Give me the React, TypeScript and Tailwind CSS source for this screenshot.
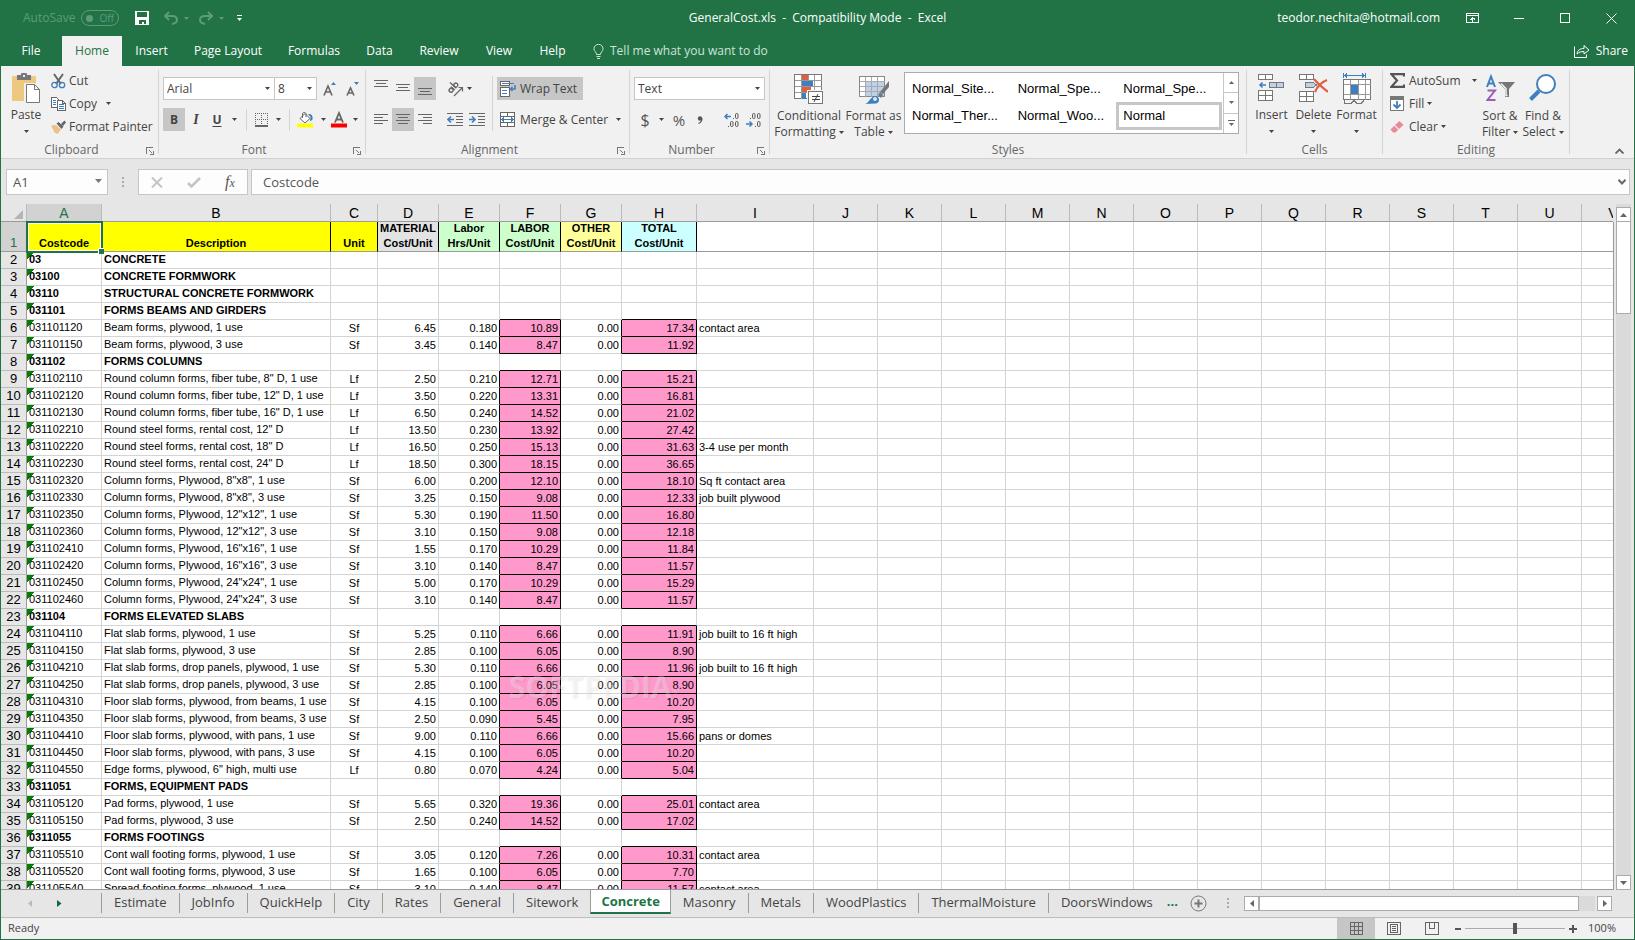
import React from "react";

type Row = [string, string, string?, string?, string?, string?, string?, string?, string?];

const rows: Row[] = [
  ["03", "CONCRETE"],
  ["03100", "CONCRETE FORMWORK"],
  ["03110", "STRUCTURAL CONCRETE FORMWORK"],
  ["031101", "FORMS BEAMS AND GIRDERS"],
  ["031101120", "Beam forms, plywood, 1 use", "Sf", "6.45", "0.180", "10.89", "0.00", "17.34", "contact area"],
  ["031101150", "Beam forms, plywood, 3 use", "Sf", "3.45", "0.140", "8.47", "0.00", "11.92"],
  ["031102", "FORMS COLUMNS"],
  ["031102110", 'Round column forms, fiber tube, 8" D, 1 use', "Lf", "2.50", "0.210", "12.71", "0.00", "15.21"],
  ["031102120", 'Round column forms, fiber tube, 12" D, 1 use', "Lf", "3.50", "0.220", "13.31", "0.00", "16.81"],
  ["031102130", 'Round column forms, fiber tube, 16" D, 1 use', "Lf", "6.50", "0.240", "14.52", "0.00", "21.02"],
  ["031102210", 'Round steel forms, rental cost, 12" D', "Lf", "13.50", "0.230", "13.92", "0.00", "27.42"],
  ["031102220", 'Round steel forms, rental cost, 18" D', "Lf", "16.50", "0.250", "15.13", "0.00", "31.63", "3-4 use per month"],
  ["031102230", 'Round steel forms, rental cost, 24" D', "Lf", "18.50", "0.300", "18.15", "0.00", "36.65"],
  ["031102320", 'Column forms, Plywood, 8"x8", 1 use', "Sf", "6.00", "0.200", "12.10", "0.00", "18.10", "Sq ft contact area"],
  ["031102330", 'Column forms, Plywood, 8"x8", 3 use', "Sf", "3.25", "0.150", "9.08", "0.00", "12.33", "job built plywood"],
  ["031102350", 'Column forms, Plywood, 12"x12", 1 use', "Sf", "5.30", "0.190", "11.50", "0.00", "16.80"],
  ["031102360", 'Column forms, Plywood, 12"x12", 3 use', "Sf", "3.10", "0.150", "9.08", "0.00", "12.18"],
  ["031102410", 'Column forms, Plywood, 16"x16", 1 use', "Sf", "1.55", "0.170", "10.29", "0.00", "11.84"],
  ["031102420", 'Column forms, Plywood, 16"x16", 3 use', "Sf", "3.10", "0.140", "8.47", "0.00", "11.57"],
  ["031102450", 'Column forms, Plywood, 24"x24", 1 use', "Sf", "5.00", "0.170", "10.29", "0.00", "15.29"],
  ["031102460", 'Column forms, Plywood, 24"x24", 3 use', "Sf", "3.10", "0.140", "8.47", "0.00", "11.57"],
  ["031104", "FORMS ELEVATED SLABS"],
  ["031104110", "Flat slab forms, plywood, 1 use", "Sf", "5.25", "0.110", "6.66", "0.00", "11.91", "job built to 16 ft high"],
  ["031104150", "Flat slab forms, plywood, 3 use", "Sf", "2.85", "0.100", "6.05", "0.00", "8.90"],
  ["031104210", "Flat slab forms, drop panels, plywood, 1 use", "Sf", "5.30", "0.110", "6.66", "0.00", "11.96", "job built to 16 ft high"],
  ["031104250", "Flat slab forms, drop panels, plywood, 3 use", "Sf", "2.85", "0.100", "6.05", "0.00", "8.90"],
  ["031104310", "Floor slab forms, plywood, from beams, 1 use", "Sf", "4.15", "0.100", "6.05", "0.00", "10.20"],
  ["031104350", "Floor slab forms, plywood, from beams, 3 use", "Sf", "2.50", "0.090", "5.45", "0.00", "7.95"],
  ["031104410", "Floor slab forms, plywood, with pans, 1 use", "Sf", "9.00", "0.110", "6.66", "0.00", "15.66", "pans or domes"],
  ["031104450", "Floor slab forms, plywood, with pans, 3 use", "Sf", "4.15", "0.100", "6.05", "0.00", "10.20"],
  ["031104550", 'Edge forms, plywood, 6" high, multi use', "Lf", "0.80", "0.070", "4.24", "0.00", "5.04"],
  ["0311051", "FORMS, EQUIPMENT PADS"],
  ["031105120", "Pad forms, plywood, 1 use", "Sf", "5.65", "0.320", "19.36", "0.00", "25.01", "contact area"],
  ["031105150", "Pad forms, plywood, 3 use", "Sf", "2.50", "0.240", "14.52", "0.00", "17.02"],
  ["0311055", "FORMS FOOTINGS"],
  ["031105510", "Cont wall footing forms, plywood, 1 use", "Sf", "3.05", "0.120", "7.26", "0.00", "10.31", "contact area"],
  ["031105520", "Cont wall footing forms, plywood, 3 use", "Sf", "1.65", "0.100", "6.05", "0.00", "7.70"],
  ["031105540", "Spread footing forms, plywood, 1 use", "Sf", "3.10", "0.140", "8.47", "0.00", "11.57", "contact area"],
];

const blankColumns = ["J", "K", "L", "M", "N", "O", "P", "Q", "R", "S", "T", "U", "V"];
const columns = ["A", "B", "C", "D", "E", "F", "G", "H", "I", ...blankColumns];

function Caret({ up = false }: { up?: boolean }) {
  return (
    <svg width="5" height="3" viewBox="0 0 5 3" className="shrink-0" aria-hidden="true">
      <path d={up ? "M0 3L2.5 0L5 3z" : "M0 0h5L2.5 3z"} fill="currentColor" />
    </svg>
  );
}

function Group({ label, launcher = false, className, children }: { label?: string; launcher?: boolean; className: string; children?: React.ReactNode }) {
  return (
    <section aria-label={label} className={className}>
      <div className="flex min-w-0 flex-1 flex-col">
        <div className="flex h-[76px]">{children}</div>
        <div className="flex h-4 items-center text-[#666]">
          <span className="flex-1 text-center">{label}</span>
          {launcher && (
            <button aria-label={label + " settings"} className="w-4 pt-0.5 pl-1">
              <svg width="8" height="8" viewBox="0 0 8 8" fill="none" stroke="#777" shapeRendering="crispEdges">
                <path d="M.5 6.500V.5h6M3 3l3.500 3.500M3.500 7.500h4v-4" />
              </svg>
            </button>
          )}
        </div>
      </div>
      <div className="my-1 w-px bg-[#d4d4d4]" />
    </section>
  );
}

function Divider() {
  return <span className="h-[22px] w-px bg-[#d4d4d4]" />;
}

function Lines({ widths, className = "" }: { widths: [number, number][]; className?: string }) {
  return (
    <svg width="14" height="17" viewBox="0 0 14 17" stroke="#666" shapeRendering="crispEdges" className={className} aria-hidden="true">
      {widths.map(([x, w], i) => (
        <path key={i} d={`M${x} ${i * 3 + 2.5}h${w}`} />
      ))}
    </svg>
  );
}

function PasteIcon() {
  return (
    <svg width="29" height="31" viewBox="0 0 29 31" aria-hidden="true">
      <rect y="3" width="24" height="25" rx="1" fill="#edc87e" />
      <path d="M5 2h4a3 3 0 0 1 6 0h4v5H5z" fill="#777" />
      <rect x="11" y="2" width="2" height="2" fill="#f1f1f1" />
      <path d="M13.500 11.500h9l5.500 5.500v13h-14.500z" fill="#fff" stroke="#f1f1f1" strokeWidth="3" />
      <path d="M14.500 11.500h8l5 5v13h-13zM22.500 11.500v5h5" fill="#fff" stroke="#777" />
    </svg>
  );
}

function CutIcon() {
  return (
    <svg width="15" height="16" viewBox="0 0 15 16" fill="none" aria-hidden="true">
      <path d="M3 1l7 10M12 1L5 11" stroke="#666" strokeWidth="2" />
      <circle cx="3.500" cy="12" r="2.700" stroke="#3e7fbf" strokeWidth="1.300" />
      <circle cx="11" cy="12" r="2.700" stroke="#3e7fbf" strokeWidth="1.300" />
    </svg>
  );
}

function CopyIcon() {
  return (
    <svg width="15" height="14" viewBox="0 0 15 14" fill="#fff" stroke="#666" shapeRendering="crispEdges" aria-hidden="true">
      <path d="M.5 .5h5l3 3v7h-8z" />
      <path d="M2 3.500h3M2 5.500h3M2 7.500h3" stroke="#3e7fbf" />
      <path d="M6.500 3.500h5l3 3v7h-8zM11.500 3.500v3h3" />
      <path d="M8 7.500h5M8 9.500h5M8 11.500h5" stroke="#3e7fbf" />
    </svg>
  );
}

function PainterIcon() {
  return (
    <svg width="15" height="14" viewBox="0 0 15 14" aria-hidden="true">
      <path d="M0 5.500L5 5l5 4.500-3.500 4.500-3-1.500z" fill="#edc087" />
      <path d="M5.500 3.500l2-1.500 5 4.500-2 2.500z" fill="#666" />
      <path d="M10 4l3.500-3.500 1.500 2L12 6z" fill="#666" />
    </svg>
  );
}

function ClipboardGroup() {
  return (
    <Group label="Clipboard" launcher className="flex w-[158px]">
      <button className="ml-[5px] flex w-10 flex-col items-center pt-[7px]">
        <PasteIcon />
        <span className="mt-0.5 leading-[18px]">Paste</span>
        <span className="mt-1.5">
          <Caret />
        </span>
      </button>
      <div className="flex flex-col pt-[3px] pl-[5px]">
        <button className="flex h-[23px] items-center gap-[3px]">
          <CutIcon />
          Cut
        </button>
        <button className="flex h-[23px] items-center gap-[3px]">
          <CopyIcon />
          Copy
          <span className="ml-1.5">
            <Caret />
          </span>
        </button>
        <button className="flex h-[23px] items-center gap-[3px] whitespace-nowrap">
          <PainterIcon />
          Format Painter
        </button>
      </div>
    </Group>
  );
}

function SelectBox({ label, value, options, className }: { label: string; value: string; options: string[]; className: string }) {
  return (
    <div className={className}>
      <select
        aria-label={label}
        defaultValue={value}
        className="h-[23px] w-full appearance-none border border-[#c6c6c6] bg-white pl-[3px] text-[12px] text-[#444] outline-none"
      >
        {options.map((o) => (
          <option key={o}>{o}</option>
        ))}
      </select>
      <span className="pointer-events-none absolute top-[10px] right-[5px]">
        <Caret />
      </span>
    </div>
  );
}

function FontGroup() {
  return (
    <Group label="Font" launcher className="flex w-[207px]">
      <div className="flex flex-col gap-2 pt-[11px] pl-1">
        <div className="flex h-[23px] items-center">
          <SelectBox label="Font" value="Arial" options={["Arial", "Calibri"]} className="relative w-[112px]" />
          <SelectBox label="Font size" value="8" options={["8", "10", "12"]} className="relative -ml-px w-[43px]" />
          <button aria-label="Increase font size" className="ml-1.5">
            <svg width="14" height="16" viewBox="0 0 14 16">
              <path d="M1 14.500L5 5l4 9.500M2.500 11h5" fill="none" stroke="#666" strokeWidth="1.600" />
              <path d="M8 4l2.500-3L13 4z" fill="#3e7fbf" />
            </svg>
          </button>
          <button aria-label="Decrease font size" className="ml-[9px]">
            <svg width="14" height="16" viewBox="0 0 14 16">
              <path d="M1 14.500L4.500 7 8 14.500M2.500 12h4" fill="none" stroke="#666" strokeWidth="1.600" />
              <path d="M8 1h5l-2.500 3z" fill="#3e7fbf" />
            </svg>
          </button>
        </div>
        <div className="flex h-[23px] items-center">
          <button className="h-[23px] w-[22px] bg-[#c6c6c6] text-[12px] font-bold">B</button>
          <button className="w-[22px] font-[Liberation_Serif,serif] text-[14px] font-bold italic">I</button>
          <button className="w-[20px] text-[12px] font-bold underline underline-offset-2">U</button>
          <span className="ml-[5px] w-[14px]">
            <Caret />
          </span>
          <Divider />
          <button aria-label="Borders" className="ml-2">
            <svg width="14" height="14" viewBox="0 0 14 14" fill="none" stroke="#666" shapeRendering="crispEdges">
              <path d="M0 .5h13M.5 0v13M12.500 0v13M6.500 0v13M0 6.500h13" strokeDasharray="1 1" />
              <path d="M0 13h13" strokeWidth="2" />
            </svg>
          </button>
          <span className="ml-[7px] w-[13px]">
            <Caret />
          </span>
          <Divider />
          <button aria-label="Fill color" className="ml-[7px]">
            <svg width="17" height="17" viewBox="0 0 17 17">
              <path d="M3 7.500L8 2.500l5 5-5 4.500z" fill="#fff" stroke="#666" />
              <path d="M5.500 7V2.500a2 2 0 0 1 3.500 0V6" fill="none" stroke="#666" />
              <path d="M11 3c4-.5 5 2 4.500 5.500L13 10.500 13.500 6z" fill="#3e7fbf" />
              <path d="M0 12.500h16v4H0z" fill="#ff0" />
            </svg>
          </button>
          <span className="ml-[7px] w-[10px]">
            <Caret />
          </span>
          <button aria-label="Font color">
            <svg width="16" height="17" viewBox="0 0 16 17">
              <path d="M4 11.500L8 2l4 9.500M5.500 8.500h5" fill="none" stroke="#666" strokeWidth="1.800" />
              <path d="M0 12.500h16v4H0z" fill="#f00" />
            </svg>
          </button>
          <span className="ml-1.5">
            <Caret />
          </span>
        </div>
      </div>
    </Group>
  );
}

function IndentIcon({ out = false }: { out?: boolean }) {
  return (
    <svg width="16" height="13" viewBox="0 0 16 13" shapeRendering="crispEdges" aria-hidden="true">
      <path d="M0 .5h16M9 3.500h7M9 6.500h7M9 9.500h7M0 12.500h16" stroke="#666" />
      <path
        d={out ? "M7 6.500H1M4 3.500l-3 3 3 3" : "M0 6.500h6M3 3.500l3 3-3 3"}
        fill="none"
        stroke="#3e7fbf"
        strokeWidth="1.600"
        shapeRendering="auto"
      />
    </svg>
  );
}

function AlignmentGroup() {
  const alignButton = "flex h-[23px] w-[22px] items-center justify-center";
  const alignActive = "flex h-[23px] w-[22px] items-center justify-center bg-[#c6c6c6]";
  return (
    <Group label="Alignment" launcher className="flex w-[264px]">
      <div className="flex flex-col gap-2 pt-[11px] pl-1">
        <div className="flex h-[23px] items-center">
          <button aria-label="Top align" className={alignButton}>
            <Lines widths={[[0, 14], [2, 10], [0, 14]]} className="mb-1" />
          </button>
          <button aria-label="Middle align" className={alignButton}>
            <Lines widths={[[0, 14], [2, 10], [0, 14]]} className="mt-1" />
          </button>
          <button aria-label="Bottom align" className={alignActive}>
            <Lines widths={[[0, 14], [2, 10], [0, 14]]} className="mt-3" />
          </button>
          <span className="ml-1">
            <Divider />
          </span>
          <button aria-label="Orientation" className="ml-[7px]">
            <svg width="16" height="16" viewBox="0 0 16 16" fill="none" stroke="#666" className="overflow-visible">
              <g transform="translate(5 12) rotate(-48)" strokeWidth="1.400">
                <circle cx="1.500" cy="-2.500" r="2" />
                <path d="M4 -5v5M6.500 -8.500V0" />
                <circle cx="8.500" cy="-2.500" r="2" />
              </g>
              <path d="M7 15L15 7M11.500 6.500H15.500V10.500" strokeWidth="1.200" />
            </svg>
          </button>
          <span className="ml-1">
            <Caret />
          </span>
        </div>
        <div className="flex h-[23px] items-center">
          <button aria-label="Align left" className={alignButton}>
            <Lines widths={[[0, 14], [0, 9], [0, 14], [0, 9]]} className="mt-0.5" />
          </button>
          <button aria-label="Center" className={alignActive}>
            <Lines widths={[[0, 14], [2, 10], [0, 14], [2, 10]]} className="mt-0.5" />
          </button>
          <button aria-label="Align right" className={alignButton}>
            <Lines widths={[[0, 14], [5, 9], [0, 14], [5, 9]]} className="mt-0.5" />
          </button>
          <span className="ml-1">
            <Divider />
          </span>
          <button aria-label="Decrease indent" className="ml-[7px]">
            <IndentIcon out />
          </button>
          <button aria-label="Increase indent" className="ml-1.5">
            <IndentIcon />
          </button>
        </div>
      </div>
      <div className="mt-2.5 ml-[7px] h-[55px] w-px bg-[#d4d4d4]" />
      <div className="flex flex-col items-start gap-2 pt-[11px] pl-1">
        <button className="flex h-[23px] items-center gap-1 bg-[#c6c6c6] pr-1.5 pl-[3px] whitespace-nowrap">
          <svg width="16" height="16" viewBox="0 0 16 16" fill="#fff" stroke="#666" shapeRendering="crispEdges">
            <path d="M.5 .5h9v4h-9zM.5 6.500h9v9h-9z" />
            <path d="M2 2.500h12M2 9.500h5M2 12.500h5" stroke="#3e7fbf" />
            <path d="M15 4v4h-4M12.500 6l-2 2 2 2" fill="none" stroke="#3e7fbf" strokeWidth="1.500" shapeRendering="auto" />
          </svg>
          Wrap Text
        </button>
        <button className="flex h-[23px] items-center gap-1 px-[3px] whitespace-nowrap">
          <svg width="16" height="16" viewBox="0 0 16 16" fill="#fff" stroke="#666" shapeRendering="crispEdges">
            <path d="M.5 .5h14v14h-14zM.5 4.500h14M.5 10.500h14M7.500 .5v4M7.500 10.500v4" />
            <path d="M2 7.500h11M4 5.500l-2 2 2 2M11 5.500l2 2-2 2" fill="none" stroke="#3e7fbf" />
          </svg>
          Merge &amp; Center
          <span className="ml-1">
            <Caret />
          </span>
        </button>
      </div>
    </Group>
  );
}

function DecimalIcon({ increase = false }: { increase?: boolean }) {
  const zero = (x: number, y: number) => <rect key={x + "-" + y} x={x} y={y} width="2.500" height="5" rx="1.200" />;
  const dot = (x: number, y: number) => <path key={"d" + x + "-" + y} d={`M${x} ${y}h1v1h-1z`} fill="#555" stroke="none" />;
  return (
    <svg width="16" height="14" viewBox="0 0 16 14" fill="none" stroke="#555" className="overflow-visible" aria-hidden="true">
      {increase ? [dot(9, 5), zero(11.5, 0.5), dot(4, 13), zero(6.5, 8.5), zero(11.5, 8.5)] : [dot(4, 5), zero(6.5, 0.5), zero(11.5, 0.5), dot(9, 13), zero(11.5, 8.5)]}
      <path
        d={increase ? "M7 3.500H1M3.500 1L1 3.500 3.500 6" : "M0 11h6M3.500 8.500L6 11l-2.500 2.500"}
        stroke="#3e7fbf"
        strokeWidth="1.500"
      />
    </svg>
  );
}

function NumberGroup() {
  return (
    <Group label="Number" launcher className="flex w-[140px]">
      <div className="flex flex-1 flex-col gap-2 pt-[11px] pr-1 pl-1">
        <SelectBox label="Number format" value="Text" options={["Text", "General", "Currency"]} className="relative h-[23px]" />
        <div className="flex h-[23px] items-center">
          <button className="w-[22px] text-[16px] leading-5 text-[#555]">$</button>
          <span className="ml-[3px]">
            <Caret />
          </span>
          <button aria-label="Percent style" className="ml-[7px] w-[16px] text-[15px] leading-5 text-[#555]">%</button>
          <button aria-label="Comma style" className="ml-[7px] flex w-[11px] justify-center">
            <svg width="6" height="8" viewBox="0 0 6 8">
              <circle cx="3" cy="2.500" r="2.200" fill="#555" />
              <path d="M5 2.500C5 5 4 6.500 1.500 7.500" fill="none" stroke="#555" strokeWidth="1.200" />
            </svg>
          </button>
          <span className="ml-3">
            <Divider />
          </span>
          <button aria-label="Increase decimal" className="ml-[7px]">
            <DecimalIcon increase />
          </button>
          <button aria-label="Decrease decimal" className="ml-[6px]">
            <DecimalIcon />
          </button>
        </div>
      </div>
    </Group>
  );
}

function StylesGroup() {
  const styles = ["Normal_Site...", "Normal_Spe...", "Normal_Spe...", "Normal_Ther...", "Normal_Woo...", "Normal"];
  return (
    <Group label="Styles" className="flex min-w-0 flex-1">
      <button className="ml-[5px] flex w-[68px] flex-col items-center pt-2 leading-4 whitespace-nowrap">
        <svg width="30" height="30" viewBox="0 0 30 30" shapeRendering="crispEdges" aria-hidden="true">
          <path d="M.5 .5h27v24h-27z" fill="#fff" stroke="#777" />
          <path d="M8 1h6v6H8zM8 13h9v5H8z" fill="#e05f43" />
          <path d="M8 7h11v5H8zM8 19h4v6H8z" fill="#3e7fbf" />
          <path d="M.5 6.500h27M.5 12.500h27M.5 18.500h27M7.500 .5v24M14.500 .5v6M20.500 .5v24M14.500 18.500v6" fill="none" stroke="#999" />
          <path d="M13.500 16.500h16v13h-16z" fill="#fff" stroke="#f1f1f1" />
          <path d="M14.500 17.500h14v12h-14z" fill="#fff" stroke="#777" />
          <path d="M18 22.500h8M18 25.500h8M24 20l-4 8" stroke="#444" shapeRendering="auto" />
        </svg>
        <span className="mt-1">Conditional</span>
        <span className="flex items-center gap-[3px]">
          Formatting <Caret />
        </span>
      </button>
      <button className="flex w-[61px] flex-col items-center pt-2 leading-4 whitespace-nowrap">
        <svg width="30" height="30" viewBox="0 0 30 30" aria-hidden="true">
          <g shapeRendering="crispEdges">
            <path d="M.5 2.500h25v20H.5z" fill="#fff" stroke="#888" />
            <path d="M7 8h18v14H7z" fill="#bdd1ea" />
            <path d="M.5 7.500h25M.5 12.500h25M.5 17.500h25M6.500 2.500v20M12.500 2.500v20M18.500 2.500v20" fill="none" stroke="#aaa" />
          </g>
          <path d="M30 7v6l-6 7-3-2z" fill="#777" />
          <path d="M21 18l3 3-2 3-3-3z" fill="#777" />
          <path d="M6 30c4-.5 5-8 11-8 4 1 4 7 0 7.500z" fill="#3e7fbf" />
          <circle cx="16" cy="25" r="2" fill="#dce8f5" />
        </svg>
        <span className="mt-1">Format as</span>
        <span className="flex items-center gap-[3px]">
          Table <Caret />
        </span>
      </button>
      <div className="mt-1.5 mr-[7px] flex h-[62px] min-w-0 flex-1 border border-[#ababab] bg-white">
        <ul className="grid flex-1 grid-cols-3 grid-rows-[27px_28px] pt-[2px] pr-px font-[Liberation_Sans,sans-serif] text-[13px] text-black">
          {styles.map((s, i) => (
            <li key={i} className="flex">
              <button
                className={
                  s === "Normal"
                    ? "flex flex-1 items-center border-3 border-[#c6c6c6] pl-[4px]"
                    : "flex flex-1 items-center pl-[7px]"
                }
              >
                {s}
              </button>
            </li>
          ))}
        </ul>
        <div className="flex w-[15px] flex-col divide-y divide-[#c6c6c6] border-l border-[#c6c6c6] text-[#666]">
          <button aria-label="Previous styles" className="flex flex-1 items-center justify-center">
            <Caret up />
          </button>
          <button aria-label="Next styles" className="flex flex-1 items-center justify-center">
            <Caret />
          </button>
          <button aria-label="More styles" className="flex flex-1 flex-col items-center justify-center gap-0.5">
            <span className="h-px w-[7px] bg-[#666]" />
            <Caret />
          </button>
        </div>
      </div>
    </Group>
  );
}

function CellsGroup() {
  const cell = "flex flex-col items-center pt-[7px]";
  return (
    <Group label="Cells" className="flex w-[136px]">
      <div className="flex pl-1">
        <button className={cell + " w-[41px]"}>
          <svg width="27" height="31" viewBox="0 0 27 31" shapeRendering="crispEdges" aria-hidden="true">
            <path d="M.5 1.500h14v5H.5zM7.500 1.500v5M.5 17.500h14v10H.5zM7.500 17.500v10M.5 22.500h14" fill="#fff" stroke="#777" />
            <path d="M11.500 9.500h14v5h-14zM18.500 9.500v5" fill="#bdd1ea" stroke="#777" />
            <path d="M8 12H2M4.500 9.500L2 12l2.500 2.500" fill="none" stroke="#3e7fbf" strokeWidth="1.600" shapeRendering="auto" />
          </svg>
          <span className="mt-0.5 leading-[18px]">Insert</span>
          <span className="mt-1.5"><Caret /></span>
        </button>
        <button className={cell + " w-[43px]"}>
          <svg width="29" height="31" viewBox="0 0 29 31" shapeRendering="crispEdges" aria-hidden="true">
            <path d="M.5 1.500h14v5H.5zM7.500 1.500v5M.5 18.500h14v10H.5zM7.500 18.500v10M.5 23.500h14" fill="#fff" stroke="#777" />
            <path d="M6.500 9.500h8l3 2.500-3 2.500h-8z" fill="#bdd1ea" stroke="#777" />
            <path d="M15 6c4 5 9 9 14 13M28 7c-5 2-10 7-12 12" fill="none" stroke="#e05f43" strokeWidth="2.200" shapeRendering="auto" />
          </svg>
          <span className="mt-0.5 leading-[18px]">Delete</span>
          <span className="mt-1.5"><Caret /></span>
        </button>
        <button className={cell + " w-[43px]"}>
          <svg width="28" height="31" viewBox="0 0 28 31" shapeRendering="crispEdges" aria-hidden="true">
            <path d="M.5 0v5M22.500 0v5M1 2.500h21M4 .5l-2.500 2L4 4.500M19 .5l2.500 2-2.500 2" fill="none" stroke="#3e7fbf" />
            <path d="M.5 6.500h27v20H.5z" fill="#fff" stroke="#777" />
            <path d="M.5 11.500h27M.5 21.500h27M7.500 6.500v20M15.500 6.500v20M22.500 6.500v20" fill="none" stroke="#999" />
            <path d="M8 12h7v9H8z" fill="#3e7fbf" />
            <path d="M1 27v3.500h7l3-3 3 3h4l3-3" fill="none" stroke="#777" />
          </svg>
          <span className="mt-0.5 leading-[18px]">Format</span>
          <span className="mt-1.5"><Caret /></span>
        </button>
      </div>
    </Group>
  );
}

function EditingGroup() {
  return (
    <Group label="Editing" className="flex w-[187px]">
      <div className="flex w-[94px] flex-col pt-[3px] pl-[7px]">
        <button className="flex h-[23px] items-center whitespace-nowrap">
          <svg width="15" height="15" viewBox="0 0 15 15" aria-hidden="true">
            <path d="M14 3.500V1.200H1.500L7 7.500l-5.500 6.300H14V11.500" fill="none" stroke="#555" strokeWidth="2.200" />
          </svg>
          <span className="ml-1 flex-1 text-left">AutoSum</span>
          <span className="ml-1.5"><Caret /></span>
        </button>
        <button className="flex h-[23px] items-center">
          <svg width="14" height="15" viewBox="0 0 14 15" shapeRendering="crispEdges" aria-hidden="true">
            <path d="M.5 .5h13v14H.5z" fill="#fff" stroke="#777" />
            <path d="M0 0h14v4H0z" fill="#777" />
            <path d="M7 5v7M3.500 8.500L7 12l3.500-3.500" fill="none" stroke="#3e7fbf" strokeWidth="1.800" shapeRendering="auto" />
          </svg>
          <span className="mr-[3px] ml-[5px]">Fill</span>
          <Caret />
        </button>
        <button className="flex h-[23px] items-center">
          <svg width="14" height="14" viewBox="0 0 14 14" aria-hidden="true">
            <path d="M5 5l4.500-4 4 4L9 9z" fill="#e88a9a" />
            <path d="M4.200 5.800l4 4L5.500 12.500H3L.5 9.500z" fill="#e88a9a" />
          </svg>
          <span className="mr-[3px] ml-[5px]">Clear</span>
          <Caret />
        </button>
      </div>
      <button className="flex w-[46px] flex-col items-center pt-2 leading-4 whitespace-nowrap">
        <svg width="29" height="30" viewBox="0 0 29 30" aria-hidden="true">
          <path d="M1 13L5 2.500 9 13M2.500 9.500h5" fill="none" stroke="#3e7fbf" strokeWidth="2" />
          <path d="M1.500 16.500h7.500L1.500 26h8" fill="none" stroke="#9a5fb5" strokeWidth="2" />
          <path d="M12 8h17l-6 7v8h-4v-8z" fill="#777" />
          <path d="M15 9.500l5 5v7h1.500" fill="none" stroke="#f1f1f1" strokeWidth="1.500" />
        </svg>
        <span className="mt-1">Sort &amp;</span>
        <span className="flex items-center gap-[3px]">
          Filter <Caret />
        </span>
      </button>
      <button className="flex w-[40px] flex-col items-center pt-2 leading-4 whitespace-nowrap">
        <svg width="28" height="30" viewBox="0 0 28 30" aria-hidden="true">
          <path d="M10 17l-8.500 8.500" stroke="#3e7fbf" strokeWidth="4" />
          <circle cx="17" cy="10" r="9" fill="#fff" stroke="#3e7fbf" strokeWidth="2" />
        </svg>
        <span className="mt-1">Find &amp;</span>
        <span className="flex items-center gap-[3px]">
          Select <Caret />
        </span>
      </button>
    </Group>
  );
}

function TitleBar() {
  return (
    <header className="grid h-9 grid-cols-[1fr_auto_1fr] items-center">
      <div className="flex items-center text-[#5d9b7a]">
        <label htmlFor="autosave" className="ml-[23px] text-[12px]">AutoSave</label>
        <button
          id="autosave"
          role="switch"
          aria-checked="false"
          className="ml-[6px] flex h-4 w-[38px] items-center gap-1.5 rounded-full border border-current pl-1 text-[10px] leading-none"
        >
          <span className="size-[7px] rounded-full bg-current" />
          Off
        </button>
        <button aria-label="Save" className="ml-4 text-white">
          <svg width="14" height="14" viewBox="0 0 14 14" fill="none" shapeRendering="crispEdges">
            <path d="M0 0h14v14H0z" fill="#fff" />
            <path d="M2 1h10v5H2zM4 9h7v4H4z" fill="#217346" />
            <path d="M7 11h2v2H7z" fill="#fff" />
          </svg>
        </button>
        <button aria-label="Undo" className="ml-3.5">
          <svg width="16" height="14" viewBox="0 0 16 14" fill="none" stroke="currentColor" strokeWidth="2">
            <path d="M6 1L2 5l4 4M2 5h7c3.500 0 5 2 5 4 0 2.500-2 3.500-5 4" />
          </svg>
        </button>
        <span className="ml-[5px]"><Caret /></span>
        <button aria-label="Redo" className="ml-2.5">
          <svg width="16" height="14" viewBox="0 0 16 14" fill="none" stroke="currentColor" strokeWidth="2">
            <path d="M9 1l4 4-4 4M13 5H6C2.500 5 1 7 1 9c0 2.500 2 3.500 5 4" />
          </svg>
        </button>
        <span className="ml-1"><Caret /></span>
        <button aria-label="Customize Quick Access Toolbar" className="ml-[13px] flex flex-col items-center gap-0.5 text-white">
          <span className="h-px w-[5px] bg-white" />
          <Caret />
        </button>
      </div>
      <h1 className="text-[12px] whitespace-pre text-white">{"GeneralCost.xls  -  Compatibility Mode  -  Excel"}</h1>
      <div className="flex items-center justify-end text-white">
        <span className="mr-[26px] text-[12px]">teodor.nechita@hotmail.com</span>
        <button aria-label="Ribbon display options" className="mr-[35px]">
          <svg width="13" height="10" viewBox="0 0 13 10" fill="none" stroke="currentColor" shapeRendering="crispEdges">
            <path d="M.5 .5h12v9H.5zM0 2.500h13M6.500 4v5M4 6.500h1v-1h3v1h1" />
          </svg>
        </button>
        <button aria-label="Minimize" className="mr-9">
          <span className="block h-px w-[10px] bg-white" />
        </button>
        <button aria-label="Maximize" className="mr-9">
          <span className="block size-[10px] border border-white" />
        </button>
        <button aria-label="Close" className="mr-[18px]">
          <svg width="11" height="11" viewBox="0 0 11 11" stroke="currentColor">
            <path d="M.5 .5l10 10M10.500 .5l-10 10" />
          </svg>
        </button>
      </div>
    </header>
  );
}

function RibbonTabs() {
  const tab = "h-full text-white ";
  return (
    <nav className="flex h-[30px] items-center text-[12px]">
      <button className={tab + "w-[62px]"}>File</button>
      <button className="h-full w-[60px] bg-[#f1f1f1] text-[#217346]">Home</button>
      <button className={tab + "w-[59px]"}>Insert</button>
      <button className={tab + "w-[94px]"}>Page Layout</button>
      <button className={tab + "w-[78px]"}>Formulas</button>
      <button className={tab + "w-[53px]"}>Data</button>
      <button className={tab + "w-[66px]"}>Review</button>
      <button className={tab + "w-[54px]"}>View</button>
      <button className={tab + "w-[53px]"}>Help</button>
      <button className="ml-3.5 flex items-center gap-1.5 text-[#cfe3d7]">
        <svg width="11" height="15" viewBox="0 0 11 15" fill="none" stroke="currentColor">
          <path d="M3.500 10.500C3.500 8 1 7.500 1 4.800a4.500 4.500 0 0 1 9 0c0 2.700-2.500 3.200-2.500 5.700zM3.500 12.500h4M4 14.500h3" />
        </svg>
        Tell me what you want to do
      </button>
      <button className="mr-[7px] ml-auto flex items-center gap-1.5 text-white">
        <svg width="16" height="14" viewBox="0 0 16 14" fill="none" stroke="currentColor">
          <path d="M.5 2.500v11h12v-3" />
          <path d="M3 10c.5-4 3-5.500 7-5.500V1.500L15 6l-5 4V7.500C7 7.500 5 8 3 10z" />
        </svg>
        Share
      </button>
    </nav>
  );
}

function Ribbon() {
  return (
    <div className="flex h-[93px] border-b border-[#d0d0d0] bg-[#f1f1f1] text-[12px]">
      <ClipboardGroup />
      <FontGroup />
      <AlignmentGroup />
      <NumberGroup />
      <StylesGroup />
      <CellsGroup />
      <EditingGroup />
      <div className="flex w-[64px] items-end justify-end pr-[10px] pb-1">
        <button aria-label="Collapse the Ribbon">
          <svg width="9" height="6" viewBox="0 0 9 6" fill="none" stroke="#666" strokeWidth="1.800">
            <path d="M.5 5.500l4-4 4 4" />
          </svg>
        </button>
      </div>
    </div>
  );
}

function DotHandle() {
  return (
    <svg width="2" height="11" viewBox="0 0 2 11" fill="#aaa" shapeRendering="crispEdges" aria-hidden="true">
      <path d="M0 0h2v2H0zM0 4h2v2H0zM0 8h2v2H0z" />
    </svg>
  );
}

function FormulaBar() {
  return (
    <div className="flex h-[45px] items-center bg-[#e6e6e6] pt-px pr-1 pl-[5px] text-[13px] text-[#555]">
      <div className="relative flex w-[102px]">
        <input aria-label="Name Box" defaultValue="A1" className="h-[26px] w-full border border-[#c6c6c6] bg-[#fdfdfd] pl-1.5 outline-none" />
        <svg width="7" height="4" viewBox="0 0 7 4" className="pointer-events-none absolute top-2.5 right-1.5" aria-hidden="true">
          <path d="M0 0h7L3.500 4z" fill="#777" />
        </svg>
      </div>
      <span className="mx-3.5">
        <DotHandle />
      </span>
      <div className="flex h-[26px] w-[110px] items-center border border-[#c6c6c6] bg-[#fdfdfd]">
        <button aria-label="Cancel" className="ml-3">
          <svg width="12" height="11" viewBox="0 0 12 11" stroke="#c4c4c4" strokeWidth="2">
            <path d="M1 .5l10 10M11 .5l-10 10" />
          </svg>
        </button>
        <button aria-label="Enter" className="ml-6">
          <svg width="14" height="11" viewBox="0 0 14 11" fill="none" stroke="#c4c4c4" strokeWidth="2.500">
            <path d="M1 6l3.500 3.500L13 1" />
          </svg>
        </button>
        <button aria-label="Insert Function" className="ml-6 font-[Liberation_Serif,serif] text-[16px] leading-4 italic">
          f<span className="text-[12px]">x</span>
        </button>
      </div>
      <div className="relative ml-[3px] flex flex-1">
        <input
          aria-label="Formula Bar"
          defaultValue="Costcode"
          className="h-[26px] w-full border border-[#c6c6c6] bg-[#fdfdfd] pl-[11px] outline-none"
        />
        <svg width="8" height="6" viewBox="0 0 8 6" fill="none" stroke="#666" strokeWidth="2" className="pointer-events-none absolute top-2.5 right-1" aria-hidden="true">
          <path d="M.5 .8L4 4.500 7.500 .8" />
        </svg>
      </div>
    </div>
  );
}

const headCell = "border-r border-b border-r-black border-b-[#9b9b9b] p-0 align-bottom font-bold";

function HeadText({ lines }: { lines: string[] }) {
  return (
    <div className="flex h-[29px] flex-col justify-end leading-[15px]">
      {lines.map((l) => (
        <span key={l}>{l}</span>
      ))}
    </div>
  );
}

function Sheet() {
  return (
    <table className="w-full min-w-[1644px] table-fixed border-separate border-spacing-0 font-[Liberation_Sans,Arial,sans-serif] text-[11px] text-black">
      <colgroup>
        <col className="w-[26px]" />
        <col className="w-[75px]" />
        <col className="w-[229px]" />
        <col className="w-[47px]" />
        <col className="w-[61px]" />
        <col className="w-[61px]" />
        <col className="w-[61px]" />
        <col className="w-[61px]" />
        <col className="w-[75px]" />
        <col className="w-[117px]" />
        {blankColumns.map((c) => (
          <col key={c} className={c === "V" ? "" : "w-[64px]"} />
        ))}
      </colgroup>
      <thead>
        <tr className="h-[18px] text-[14px]">
          <th aria-label="Select all" className="border-r border-b border-r-[#bbb] border-b-[#9b9b9b] bg-[#e6e6e6] p-0">
            <svg width="9" height="9" viewBox="0 0 9 9" className="mt-1 ml-[13px]" aria-hidden="true">
              <path d="M9 0v9H0z" fill="#b4b4b4" />
            </svg>
          </th>
          {columns.map((c) => (
            <th
              key={c}
              scope="col"
              className={
                c === "A"
                  ? "border-r border-b border-r-[#bbb] border-b-[#9b9b9b] bg-[#d2d2d2] p-0 pt-px leading-4 font-normal text-[#217346]"
                  : "border-r border-b border-r-[#bbb] border-b-[#9b9b9b] bg-[#e6e6e6] p-0 pt-px leading-4 font-normal"
              }
            >
              {c}
            </th>
          ))}
        </tr>
      </thead>
      <tbody>
        <tr className="h-[30px] text-center">
          <th scope="row" className="border-r border-b border-[#9b9b9b] bg-[#d2d2d2] p-0 align-bottom text-[13px] leading-4 font-normal text-[#217346]">
            1
          </th>
          <td className={headCell + " relative bg-[#ff0]"}>
            <HeadText lines={["Costcode"]} />
            <div className="absolute -top-px -right-[2px] -bottom-[2px] -left-px border-2 border-[#217346]">
              <div className="h-full border border-white" />
              <span className="absolute -right-[3px] -bottom-[3px] size-[6px] border-t border-l border-white bg-[#217346]" />
            </div>
          </td>
          <td className={headCell + " bg-[#ff0]"}><HeadText lines={["Description"]} /></td>
          <td className={headCell + " bg-[#ff0]"}><HeadText lines={["Unit"]} /></td>
          <td className={headCell + " bg-[#e3e3e3]"}><HeadText lines={["MATERIAL", "Cost/Unit"]} /></td>
          <td className={headCell + " bg-[#cfc]"}><HeadText lines={["Labor", "Hrs/Unit"]} /></td>
          <td className={headCell + " bg-[#cfc]"}><HeadText lines={["LABOR", "Cost/Unit"]} /></td>
          <td className={headCell + " bg-[#ff9]"}><HeadText lines={["OTHER", "Cost/Unit"]} /></td>
          <td className={headCell + " bg-[#cff]"}><HeadText lines={["TOTAL", "Cost/Unit"]} /></td>
          <td className="border-r border-b border-[#d4d4d4] border-b-[#9b9b9b] p-0" />
          {blankColumns.map((c) => (
            <td key={c} className="border-r border-b border-[#d4d4d4] border-b-[#9b9b9b] p-0" />
          ))}
        </tr>
        {rows.map((r, i) => {
          const priced = r[5] !== undefined;
          const nextPriced = rows[i + 1]?.[5] !== undefined;
          const weight = priced ? "" : " font-bold";
          const num = "border-r border-b border-[#d4d4d4] px-[2px] pt-px pb-0 text-right leading-[15px]";
          const beforeCost = priced ? "border-r border-b border-r-black border-b-[#d4d4d4] px-[2px] pt-px pb-0 text-right leading-[15px]" : num;
          const cost = priced
            ? "border-r border-b border-black bg-[#ff99cc] px-[2px] pt-px pb-0 text-right leading-[15px]"
            : nextPriced
              ? "border-r border-b border-r-[#d4d4d4] border-b-black p-0"
              : num;
          return (
            <tr key={r[0]} className="h-[17px] whitespace-nowrap">
              <th scope="row" className="border-r border-b border-r-[#9b9b9b] border-b-[#bbb] bg-[#e6e6e6] p-0 text-[13px] leading-4 font-normal">
                {i + 2}
              </th>
              <td className={"border-r border-b border-[#d4d4d4] bg-[linear-gradient(135deg,#008000_5px,transparent_5px)] px-[2px] pt-0 pb-px leading-[15px]" + weight}>
                {r[0]}
              </td>
              <td className={"border-r border-b border-[#d4d4d4] px-[2px] pt-0 pb-px leading-[15px]" + weight}>{r[1]}</td>
              <td className="border-r border-b border-[#d4d4d4] px-0 pt-px pb-0 text-center leading-[15px]">{r[2]}</td>
              <td className={num}>{r[3]}</td>
              <td className={beforeCost}>{r[4]}</td>
              <td className={cost}>{r[5]}</td>
              <td className={beforeCost}>{r[6]}</td>
              <td className={cost}>{r[7]}</td>
              <td className="border-r border-b border-[#d4d4d4] px-[2px] pt-px pb-0 leading-[15px]">{r[8]}</td>
              {blankColumns.map((c) => (
                <td key={c} className="border-r border-b border-[#d4d4d4] p-0" />
              ))}
            </tr>
          );
        })}
      </tbody>
    </table>
  );
}

const scrollButton = "flex size-[15px] shrink-0 items-center justify-center border border-[#ababab] bg-white text-[#666]";

function SheetArea() {
  return (
    <div className="flex min-h-0 flex-1 bg-[#e6e6e6]">
      <div className="relative min-w-0 flex-1 overflow-hidden border-b border-[#9b9b9b] bg-white">
        <Sheet />
        <div
          aria-hidden="true"
          className="pointer-events-none absolute top-[461px] left-[508px] text-[30px] leading-[44px] font-bold text-white/30 [text-shadow:1px_1px_2px_rgb(0_0_0/0.07)]"
        >
          SOFTPEDIA<sup className="text-[9px] font-normal">®</sup>
        </div>
      </div>
      <div className="mt-[18px] w-px bg-[#9b9b9b]" />
      <div className="mr-[3px] ml-[2px] flex flex-col bg-[#dadada] pt-[3px]">
        <button aria-label="Scroll up" className={scrollButton}>
          <svg width="7" height="4" viewBox="0 0 7 4"><path d="M0 4h7L3.500 0z" fill="currentColor" /></svg>
        </button>
        <div className="h-[92px] border border-t-0 border-[#ababab] bg-white" />
        <div className="flex-1" />
        <button aria-label="Scroll down" className={scrollButton}>
          <svg width="7" height="4" viewBox="0 0 7 4"><path d="M0 0h7L3.500 4z" fill="currentColor" /></svg>
        </button>
      </div>
    </div>
  );
}

function SheetTabs() {
  const before = ["Estimate", "JobInfo", "QuickHelp", "City", "Rates", "General", "Sitework"];
  const after = ["Masonry", "Metals", "WoodPlastics", "ThermalMoisture", "DoorsWindows"];
  return (
    <div className="flex h-[27px] shrink-0 bg-[#e6e6e6] text-[13px] text-[#444]">
      <div className="flex w-[100px] items-center pl-[27px]">
        <svg width="4" height="7" viewBox="0 0 4 7" aria-hidden="true"><path d="M4 0v7L0 3.500z" fill="#bbb" /></svg>
        <svg width="5" height="7" viewBox="0 0 5 7" className="ml-[25px]" aria-hidden="true"><path d="M0 0v7l4.500-3.500z" fill="#0b6a3a" /></svg>
      </div>
      <nav className="flex">
        {before.map((t) => (
          <button key={t} className="mt-[3px] mb-[4px] border-l border-[#9b9b9b] px-3 pb-0.5 leading-[18px]">{t}</button>
        ))}
        <button className="-mt-px mb-[3px] border-x border-b-2 border-x-[#9b9b9b] border-b-[#217346] bg-white px-[10px] leading-5 font-bold text-[#217346]">
          Concrete
        </button>
        {after.map((t) => (
          <button key={t} className="mt-[3px] mb-[4px] border-r border-[#9b9b9b] px-3 pb-0.5 leading-[18px] first-of-type:pl-2 last:border-r-0">{t}</button>
        ))}
      </nav>
      <button aria-label="More sheets" className="ml-0.5 pb-1 font-bold text-[#217346]">...</button>
      <button aria-label="New sheet" className="ml-3">
        <svg width="17" height="17" viewBox="0 0 17 17" fill="none" stroke="#777">
          <circle cx="8.500" cy="8.500" r="7.500" />
          <path d="M8.500 4.500v8M4.500 8.500h8" strokeWidth="2" />
        </svg>
      </button>
      <div className="ml-auto flex items-center">
        <DotHandle />
        <button aria-label="Scroll left" className={scrollButton + " ml-[15px]"}>
          <svg width="4" height="7" viewBox="0 0 4 7"><path d="M4 0v7L0 3.500z" fill="currentColor" /></svg>
        </button>
        <div className="flex h-[15px] w-[336px] bg-[#dadada]">
          <div className="w-[320px] border border-[#ababab] bg-white" />
        </div>
        <button aria-label="Scroll right" className={scrollButton + " mr-[22px] ml-[2px]"}>
          <svg width="4" height="7" viewBox="0 0 4 7"><path d="M0 0v7l4-3.500z" fill="currentColor" /></svg>
        </button>
      </div>
    </div>
  );
}

function StatusBar() {
  return (
    <footer className="flex h-[22px] shrink-0 items-center border-t border-[#bdbdbd] bg-[#f1f1f1] text-[11px] text-[#444]">
      <span className="pl-[7px]">Ready</span>
      <button aria-label="Normal view" className="ml-auto flex h-full w-[38px] items-center justify-center bg-[#c6c6c6]">
        <svg width="13" height="13" viewBox="0 0 13 13" fill="none" stroke="#666" shapeRendering="crispEdges">
          <path d="M.5 .5h12v12H.5zM4.500 0v13M8.500 0v13M0 4.500h13M0 8.500h13" />
        </svg>
      </button>
      <button aria-label="Page layout view" className="flex w-[38px] justify-center">
        <svg width="14" height="13" viewBox="0 0 14 13" fill="none" stroke="#666" shapeRendering="crispEdges">
          <path d="M.5 .5h13v12H.5zM3.500 2.500h7v8h-7zM5 4.500h4M5 6.500h4M5 8.500h4" />
        </svg>
      </button>
      <button aria-label="Page break preview" className="flex w-[38px] justify-center">
        <svg width="14" height="13" viewBox="0 0 14 13" fill="none" stroke="#666" shapeRendering="crispEdges">
          <path d="M.5 .5h13v12H.5zM4.500 0v6.500M9.500 0v6.500M4.500 6.500h5" />
        </svg>
      </button>
      <button aria-label="Zoom out" className="ml-1"><span className="block h-[2px] w-[6px] bg-[#555]" /></button>
      <input
        type="range"
        aria-label="Zoom"
        min="0"
        max="200"
        defaultValue="100"
        className="ml-1 h-3 w-[100px] appearance-none bg-[linear-gradient(#aaa,#aaa)] bg-[length:100%_1px] bg-center bg-no-repeat [&::-webkit-slider-thumb]:h-[11px] [&::-webkit-slider-thumb]:w-[4px] [&::-webkit-slider-thumb]:appearance-none [&::-webkit-slider-thumb]:bg-[#555]"
      />
      <button aria-label="Zoom in" className="ml-1">
        <svg width="8" height="8" viewBox="0 0 8 8" stroke="#555" strokeWidth="2" shapeRendering="crispEdges"><path d="M4 0v8M0 4h8" /></svg>
      </button>
      <span className="mr-[18px] ml-[11px]">100%</span>
    </footer>
  );
}

export default function App() {
  return (
    <div className="flex h-screen flex-col overflow-hidden bg-[#217346] font-[Open_Sans,Noto_Sans,sans-serif] text-[#444]">
      <TitleBar />
      <RibbonTabs />
      <main className="flex min-h-0 flex-1 flex-col border border-t-0 border-[#217346]">
        <Ribbon />
        <FormulaBar />
        <SheetArea />
        <SheetTabs />
        <StatusBar />
      </main>
    </div>
  );
}
